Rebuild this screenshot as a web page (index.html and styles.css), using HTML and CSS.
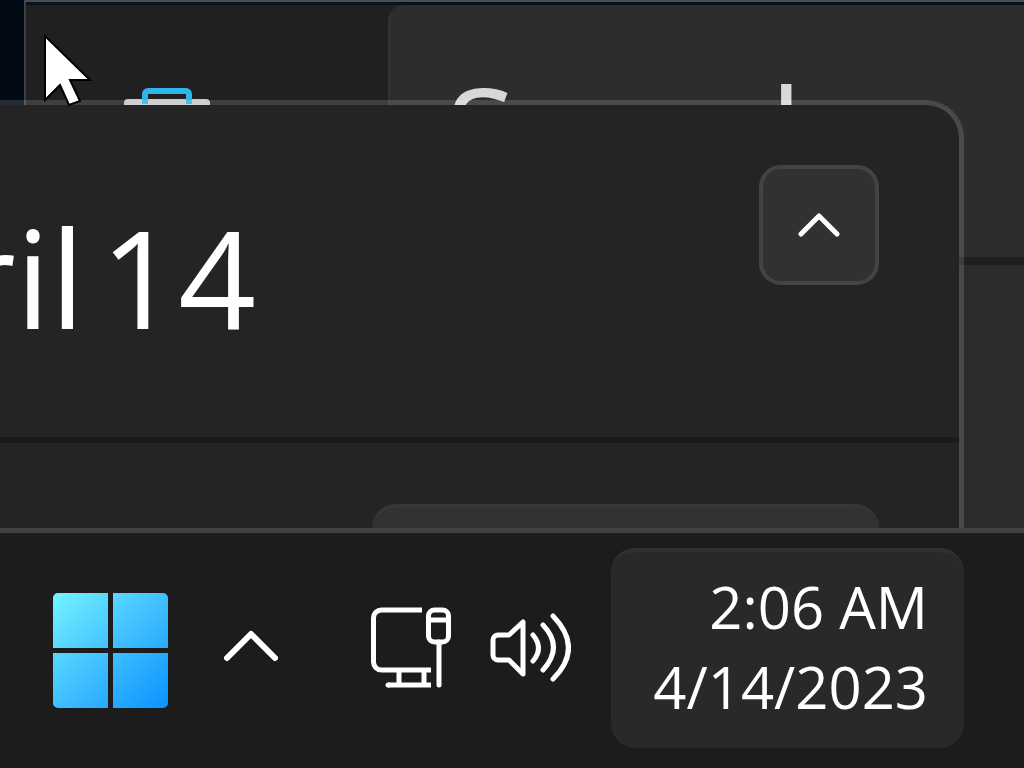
FILE: index.html
```
<!DOCTYPE html>
<html lang="en">
<head>
  <meta charset="UTF-8" />
  <title>Desktop</title>
  <link rel="stylesheet" href="styles.css">
</head>
<body>
  <main class="desktop">
    <section class="window">
      <div class="tabs">
        <svg class="app-icon" viewBox="0 0 86 60" aria-hidden="true">
          <path d="M4 12h78a4 4 0 0 1 4 4v44H0V16a4 4 0 0 1 4-4z" fill="#c8c8cc"/>
          <path d="M21 17V7a3 3 0 0 1 3-3h38a3 3 0 0 1 3 3v10" fill="none" stroke="#2fb4ec" stroke-width="6"/>
        </svg>
      </div>
      <div class="page">
        <div class="page-head">Search</div>
      </div>
    </section>

    <section class="panel">
      <header class="panel-head">
        <div class="date"><span>Friday, April</span> <span>14</span></div>
        <button class="collapse" aria-label="Collapse">
          <svg width="42" height="26" viewBox="0 0 42 26">
            <path d="M3 22L21 4l18 18" fill="none" stroke="#fff" stroke-width="5" stroke-linecap="round" stroke-linejoin="round"/>
          </svg>
        </button>
      </header>
      <div class="panel-body">
        <div class="focus"></div>
      </div>
    </section>

    <svg class="cursor" viewBox="0 0 50 72" aria-hidden="true">
      <path d="M2 2v64l15-15 9 20 11-4-10-21h20z" fill="#fff" stroke="#000" stroke-width="2"/>
    </svg>
  </main>

  <footer class="taskbar">
    <button class="start" aria-label="Start">
      <svg width="115" height="115" viewBox="0 0 115 115">
        <defs>
          <linearGradient id="blue" x1="0" y1="0" x2="115" y2="115" gradientUnits="userSpaceOnUse">
            <stop offset="0" stop-color="#74f4ff"/>
            <stop offset=".5" stop-color="#41bfff"/>
            <stop offset="1" stop-color="#0a93ff"/>
          </linearGradient>
        </defs>
        <path d="M5 0h50v55H0V5a5 5 0 0 1 5-5zM60 0h50a5 5 0 0 1 5 5v50H60zM0 60h55v55H5a5 5 0 0 1-5-5zM60 60h55v50a5 5 0 0 1-5 5H60z" fill="url(#blue)"/>
      </svg>
    </button>
    <button class="more" aria-label="Show hidden icons">
      <svg width="54" height="32" viewBox="0 0 54 32">
        <path d="M3 28L27 4l24 24" fill="none" stroke="#fff" stroke-width="6" stroke-linecap="round" stroke-linejoin="round"/>
      </svg>
    </button>
    <button class="status" aria-label="Network and volume">
      <svg width="81" height="82" viewBox="0 0 81 82" fill="none" stroke="#fff" stroke-width="5">
        <path d="M51 3H10.500a8 8 0 0 0-8 8v44a8 8 0 0 0 8 8H60M28 63v15M53 63v15M60 78H17"/>
        <path d="M17 78h1" stroke-linecap="round"/>
        <rect x="57.500" y="3" width="20" height="32" rx="6"/>
        <path d="M60 13h16" />
        <path d="M68 35v43" stroke-linecap="round"/>
      </svg>
      <svg width="81" height="82" viewBox="0 0 81 82" fill="none" stroke="#fff" stroke-width="5" stroke-linecap="round" stroke-linejoin="round">
        <path d="M8 28h11L33 15v52L19 53H8a5 5 0 0 1-5-5V33a5 5 0 0 1 5-5z"/>
        <path d="M43 28q11 13 0 26M53 18q21 22 0 45M63 9q31 32 0 63"/>
      </svg>
    </button>
    <button class="clock">
      <span>2:06 AM</span>
      <span>4/14/2023</span>
    </button>
  </footer>
</body>
</html>
```

FILE: styles.css
```
* {
  box-sizing: border-box;
}

body {
  margin: 0;
  height: 100vh;
  display: flex;
  flex-direction: column;
  overflow: hidden;
  background: #1c1c1c;
  color: #fff;
  font-family: "Open Sans", "Noto Sans", sans-serif;
}

button {
  border: none;
  padding: 0;
  background: none;
  color: inherit;
  font: inherit;
}

svg {
  display: block;
}

.desktop {
  flex: 1;
  position: relative;
  overflow: hidden;
  padding-left: 24px;
  background: #020a16;
}

/* window behind the flyout */
.window {
  height: 100%;
  display: flex;
  border-top: 2px solid #464e5a;
  border-left: 2px solid #3c4147;
  padding-top: 3px;
  background: #0a121e;
}

.tabs {
  width: 362px;
  padding: 82px 0 0 98px;
  background: #202020;
}

.app-icon {
  width: 86px;
  height: 60px;
}

.page {
  flex: 1;
  border-left: 2px solid #323232;
  border-radius: 16px 0 0 0;
  background: #2c2c2c;
  box-shadow: -16px 0 0 #202020;
}

.page-head {
  height: 260px;
  padding: 46px 0 0 56px;
  border-bottom: 8px solid #1f1f1f;
  background: #2d2d2d;
  border-radius: 16px 0 0 0;
  color: #d8d8d8;
  font-size: 127px;
  line-height: 160px;
}

/* calendar flyout */
.panel {
  position: absolute;
  top: 100px;
  right: 60px;
  bottom: 0;
  left: 0;
  display: flex;
  flex-direction: column;
  border: 5px solid rgba(255, 255, 255, 0.14);
  border-width: 5px 5px 0 0;
  border-radius: 0 38px 0 0;
  background: #242424;
  background-clip: padding-box;
}

.panel-head {
  height: 338px;
  display: flex;
  justify-content: space-between;
  border-bottom: 6px solid #1a1a1a;
  padding: 60px 80px 0 0;
}

.date {
  width: 256px;
  display: flex;
  justify-content: flex-end;
  gap: 16px;
  padding-top: 18px;
  font-size: 136px;
  line-height: 188px;
  white-space: nowrap;
}

.collapse {
  width: 120px;
  height: 120px;
  display: flex;
  align-items: center;
  justify-content: center;
  border: 4px solid #434343;
  border-radius: 22px;
  background: #313131;
}

.panel-body {
  flex: 1;
  display: flex;
  justify-content: flex-end;
  padding: 61px 80px 0 0;
}

.focus {
  width: 507px;
  border-top: 4px solid #373737;
  border-radius: 26px 26px 0 0;
  background: #323232;
}

.cursor {
  position: absolute;
  top: 34px;
  left: 43px;
  width: 50px;
  height: 72px;
}

.taskbar {
  height: 240px;
  display: flex;
  align-items: center;
  border-top: 5px solid #414141;
  padding: 15px 60px 20px 53px;
  background: #1c1c1c;
}

.start {
  padding-top: 5px;
}

.more {
  margin-left: 56px;
  padding-bottom: 4px;
}

.status {
  display: flex;
  gap: 38px;
  margin-left: 93px;
}

.clock {
  width: 353px;
  height: 200px;
  margin-left: auto;
  padding: 0 36px 6px 0;
  border-top: 4px solid #303030;
  border-radius: 24px;
  background: #292929;
  font-size: 58px;
  line-height: 80px;
  text-align: right;
}

.clock span {
  display: block;
}
```
